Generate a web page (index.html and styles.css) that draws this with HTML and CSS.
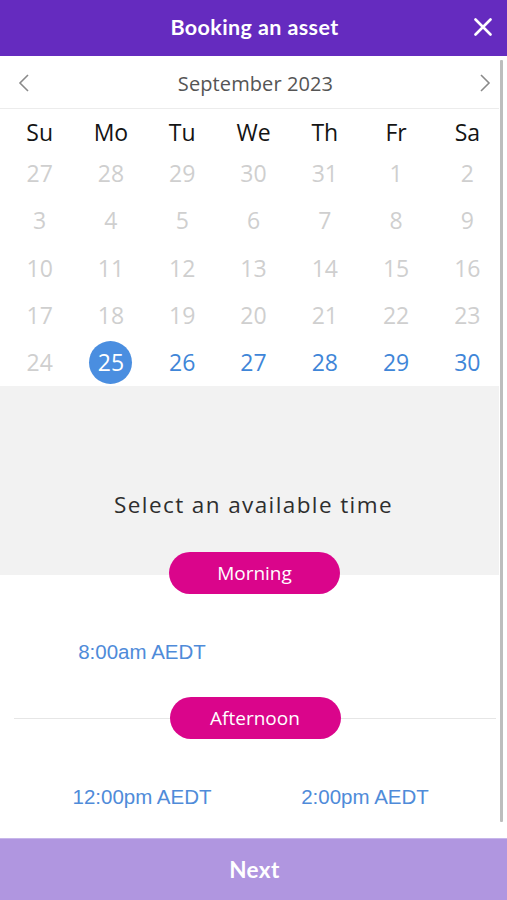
FILE: index.html
```html
<!DOCTYPE html>
<html lang="en">
<head>
<meta charset="utf-8">
<title>Booking an asset</title>
<link rel="stylesheet" href="styles.css">
</head>
<body>
<div class="app">
  <header class="topbar">
    <h1 class="title">Booking an asset</h1>
    <button class="close" aria-label="Close">
      <svg width="18" height="18" viewBox="0 0 18 18"><path d="M1.5 1.5 L16.5 16.5 M16.5 1.5 L1.5 16.5" stroke="#fff" stroke-width="2.6" stroke-linecap="round" fill="none"/></svg>
    </button>
  </header>

  <main class="content">
    <div class="month">
      <button class="nav" aria-label="Previous month">
        <svg width="12" height="18" viewBox="0 0 12 18"><path d="M10 1 L2 9 L10 17" stroke="#8a8a8a" stroke-width="1.6" fill="none"/></svg>
      </button>
      <span class="month-name">September 2023</span>
      <button class="nav" aria-label="Next month">
        <svg width="12" height="18" viewBox="0 0 12 18"><path d="M2 1 L10 9 L2 17" stroke="#8a8a8a" stroke-width="1.6" fill="none"/></svg>
      </button>
    </div>

    <div class="calendar">
      <div class="dow">Su</div><div class="dow">Mo</div><div class="dow">Tu</div><div class="dow">We</div><div class="dow">Th</div><div class="dow">Fr</div><div class="dow">Sa</div>

      <div class="day off">27</div><div class="day off">28</div><div class="day off">29</div><div class="day off">30</div><div class="day off">31</div><div class="day off">1</div><div class="day off">2</div>
      <div class="day off">3</div><div class="day off">4</div><div class="day off">5</div><div class="day off">6</div><div class="day off">7</div><div class="day off">8</div><div class="day off">9</div>
      <div class="day off">10</div><div class="day off">11</div><div class="day off">12</div><div class="day off">13</div><div class="day off">14</div><div class="day off">15</div><div class="day off">16</div>
      <div class="day off">17</div><div class="day off">18</div><div class="day off">19</div><div class="day off">20</div><div class="day off">21</div><div class="day off">22</div><div class="day off">23</div>
      <div class="day off">24</div><div class="day selected"><span class="dot">25</span></div><div class="day avail">26</div><div class="day avail">27</div><div class="day avail">28</div><div class="day avail">29</div><div class="day avail">30</div>
    </div>

    <section class="intro">
      <p class="prompt">Select an available time</p>
    </section>

    <div class="pill-row first">
      <span class="pill">Morning</span>
    </div>

    <div class="slots">
      <a class="slot">8:00am AEDT</a>
    </div>

    <div class="divider">
      <span class="line"></span>
      <span class="pill">Afternoon</span>
      <span class="line"></span>
    </div>

    <div class="slots">
      <a class="slot">12:00pm AEDT</a>
      <a class="slot">2:00pm AEDT</a>
    </div>

    <div class="scrollbar"><span class="thumb"></span></div>
  </main>

  <footer class="footer">
    <button class="next">Next</button>
  </footer>
</div>
</body>
</html>
```

FILE: styles.css
```css
* { box-sizing: border-box; }

html, body {
  margin: 0;
  padding: 0;
  background: #fff;
}

body {
  font-family: "Open Sans", "Noto Sans", sans-serif;
}

.app {
  width: 507px;
  height: 900px;
  display: flex;
  flex-direction: column;
  overflow: hidden;
}

.topbar {
  height: 56px;
  flex: none;
  background: #652bbf;
  display: flex;
  align-items: center;
  justify-content: center;
  position: relative;
}

.title {
  margin: 0;
  font-family: "Lato", "Open Sans", sans-serif;
  font-weight: 700;
  font-size: 21.5px;
  color: #fff;
  letter-spacing: 0.4px;
  margin-top: -2px;
  margin-left: 2px;
}

.close {
  position: absolute;
  right: 15px;
  top: 18px;
  width: 18px;
  height: 18px;
  padding: 0;
  border: 0;
  background: none;
  display: flex;
}

.content {
  flex: 1;
  position: relative;
  display: flex;
  flex-direction: column;
}

.month {
  height: 53px;
  flex: none;
  display: flex;
  align-items: center;
  justify-content: space-between;
  padding: 2px 16px 0 18px;
  border-bottom: 1px solid #ececec;
}

.nav {
  border: 0;
  background: none;
  padding: 0;
  display: flex;
}

.month-name {
  font-size: 20px;
  color: #555;
  letter-spacing: 0.1px;
  margin-left: 2px;
}

.calendar {
  display: grid;
  grid-template-columns: repeat(7, 1fr);
  grid-template-rows: 41px repeat(5, 47.25px);
  padding: 0 4px;
  flex: none;
}

.dow {
  display: flex;
  align-items: center;
  justify-content: center;
  font-size: 23px;
  color: #141414;
  padding-top: 4px;
}

.day {
  display: flex;
  align-items: center;
  justify-content: center;
  font-size: 23px;
  padding-bottom: 1px;
}

.day.off { color: #cfcfcf; }
.day.avail { color: #3f86d8; }

.dot {
  width: 43px;
  height: 43px;
  border-radius: 50%;
  background: #4a8ee0;
  color: #fff;
  display: flex;
  align-items: center;
  justify-content: center;
}

.intro {
  background: #f2f2f2;
  height: 189px;
  flex: none;
  padding-top: 105px;
}

.prompt {
  margin: 0;
  text-align: center;
  font-size: 22.5px;
  line-height: 28px;
  color: #2e2e2e;
  letter-spacing: 1.4px;
}

.pill-row {
  display: flex;
  justify-content: center;
  padding-left: 2px;
}

.pill-row.first {
  margin-top: -23px;
}

.pill {
  width: 171px;
  height: 42px;
  border-radius: 21px;
  background: #da058b;
  color: #fff;
  font-size: 19px;
  display: flex;
  align-items: center;
  justify-content: center;
  flex: none;
}

.slots {
  display: grid;
  grid-template-columns: 223px 223px;
  justify-content: center;
  margin-top: 46px;
}

.slot {
  text-align: center;
  font-family: "Liberation Sans", Arial, sans-serif;
  font-size: 20.5px;
  line-height: 24px;
  color: #4f8bd9;
}

.divider {
  display: flex;
  align-items: center;
  padding: 0 11px 0 14px;
  margin-top: 33px;
}

.line {
  flex: 1;
  height: 1px;
  background: #e6e6e6;
}

.scrollbar {
  position: absolute;
  right: 0;
  top: 0;
  bottom: 0;
  width: 8px;
  background: #fff;
  padding: 4px 0 16px 1px;
  display: flex;
}

.thumb {
  width: 2.5px;
  background: #bdbdbd;
  border-radius: 1px;
}

.footer {
  height: 62px;
  flex: none;
  background: #b096e0;
  border-top: 1px solid #c7b6ea;
  display: flex;
}

.next {
  flex: 1;
  border: 0;
  background: none;
  color: #fff;
  font-family: "Lato", "Open Sans", sans-serif;
  font-weight: 700;
  font-size: 22.5px;
  letter-spacing: 0.4px;
  padding: 0 0 0 2px;
}
```
